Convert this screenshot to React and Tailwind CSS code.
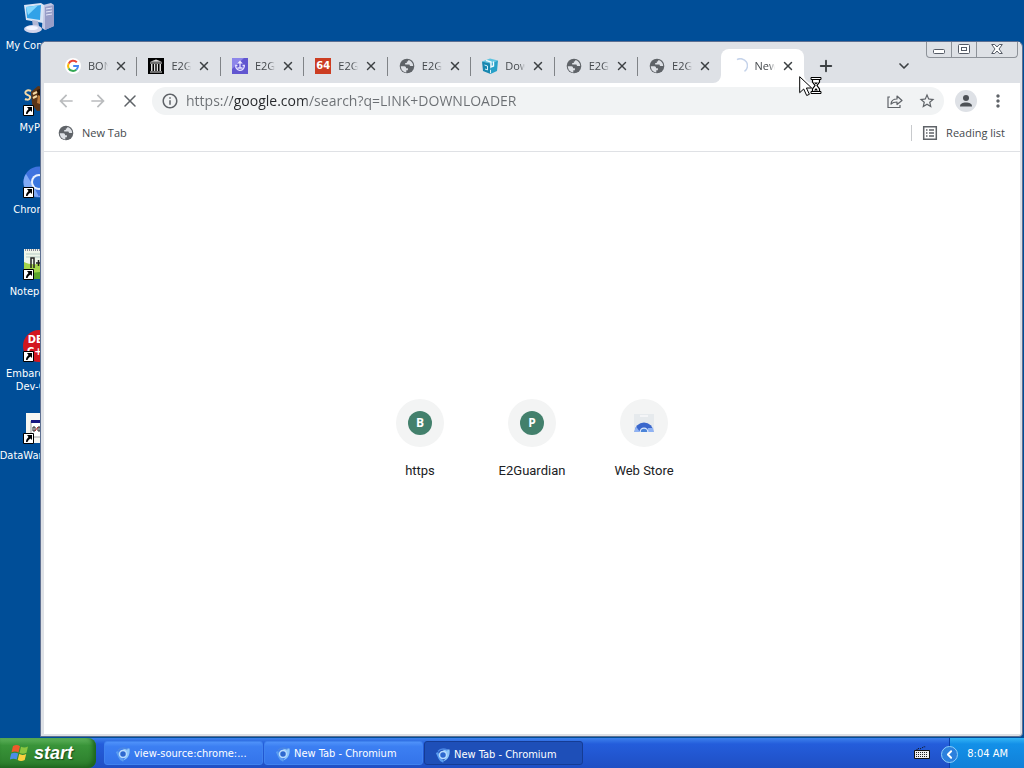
import { ChevronDown, ChevronLeft, Plus, X } from "lucide-react";
import { MdStarBorder, MdMoreVert, MdArrowBack, MdArrowForward, MdOutlineInfo } from "react-icons/md";

function Globe() {
  return (
    <svg viewBox="0 0 16 16" className="size-4">
      <circle cx="8" cy="8" r="7.3" fill="#5f6368" />
      <path d="M1.8 8.2l3.6.1c1.3 0 1.6.9 1.7 2h1.8v1.9H7.3v2.2C4 14.100 2 11.600 1.800 8.200zM9.400 2.100c-.1 1-.6 1.500-1.600 1.500v1.300H6.200v1.600h4.200c.4.600.4 1.300.9 1.500h2.900c-.1-2.900-2-5.200-4.800-5.900z" fill="#dee1e6" />
    </svg>
  );
}

function GoogleIcon() {
  return (
    <svg viewBox="0 0 16 16" className="size-4">
      <circle cx="8" cy="8" r="8" fill="#fff" />
      <g fill="none" strokeWidth="2">
        <path d="M11.800 4.200A5 5 0 0 0 3.700 5.600" stroke="#ea4335" />
        <path d="M3.700 5.600a5 5 0 0 0 0 4.800" stroke="#fbbc05" />
        <path d="M3.700 10.400a5 5 0 0 0 7.600 1.300" stroke="#34a853" />
        <path d="M11.300 11.700A5 5 0 0 0 13 8H8.200" stroke="#4285f4" />
      </g>
    </svg>
  );
}

function ArchiveIcon() {
  return (
    <svg viewBox="0 0 16 16" className="size-4">
      <path d="M0 0h16v16H0z" fill="#000" />
      <path d="M8 1.500l6 2.300H2zM2 4.500h12v1H2zM3 6h1.500v7H3zM6 6h1.300v7H6zM8.700 6H10v7H8.700zM11.500 6H13v7h-1.500zM2 13.500h12v1H2z" fill="#ddd" />
    </svg>
  );
}

function PurpleIcon() {
  return (
    <svg viewBox="0 0 16 16" className="size-4">
      <path d="M0 0h16v16H0z" fill="#6156d0" />
      <path d="M0 0h12L0 11z" fill="#8d86ea" />
      <path d="M8 2.500l2.800 3H5.200z" fill="#f0eeff" />
      <path d="M8 5v5M5.500 7.500H3.700a4.300 4.300 0 1 0 8.600 1V7.500h-1.800M5.500 10h5" fill="none" stroke="#e4e1ff" strokeWidth="1.300" />
    </svg>
  );
}

function BoxIcon() {
  return (
    <svg viewBox="0 0 16 16" className="size-4">
      <path d="M0 3.500L8 .5l8 2-7.500 3z" fill="#5cc3e0" />
      <path d="M0 3.500l8.500 2V16L1 13z" fill="#1787b0" />
      <path d="M8.500 5.500l7.500-3-1 10.500-6.500 3z" fill="#27a0c8" />
      <path d="M4 2.300l5 1.700v5l2.500-1V3.500" fill="none" stroke="#f1fbfe" strokeWidth="1.400" />
      <path d="M2.500 7l3 1v4l-2.500-1M8.500 12v3" fill="none" stroke="#d6f1f9" />
    </svg>
  );
}

function Commodore() {
  return (
    <span className="flex size-4 items-center justify-center bg-[#cc3d22] font-['DejaVu_Sans'] text-[10px] leading-none font-bold text-white">
      64
    </span>
  );
}

function Spinner() {
  return (
    <svg viewBox="0 0 16 16" className="size-4" fill="none">
      <path d="M5 1.600A7 7 0 0 1 12.500 13.400" stroke="#c5d3ea" strokeWidth="1.500" />
    </svg>
  );
}

function ChromiumIcon({ className }) {
  return (
    <svg viewBox="0 0 32 32" className={className}>
      <circle cx="16" cy="16" r="15.500" fill="#3f73df" />
      <path d="M3 8l8 13 5 10C6 31 .5 24 .5 16c0-3 1-6 2.500-8z" fill="#80aaf5" />
      <path d="M16 9h14c3 9-2 21-14 22l7-11z" fill="#a8c9ff" />
      <circle cx="16" cy="16" r="8" fill="#e9f1ff" />
      <circle cx="16" cy="16" r="6" fill="#3975de" />
    </svg>
  );
}

function TaskIcon() {
  return (
    <svg viewBox="0 0 16 16" className="size-4 shrink-0">
      <path d="M2 5.500L4.500 11a6 6 0 0 0 4 3.500" fill="none" stroke="#5a9df0" strokeWidth="2.500" />
      <path d="M8 2.500h6.500c.8 5-1 10-6 12l2.500-4.500z" fill="#8cc6fa" />
      <path d="M3 4.500C5 2 9 1.500 12.500 3" fill="none" stroke="#4a86e4" strokeWidth="1.500" />
      <circle cx="8" cy="8" r="3.500" fill="#2d68cf" stroke="#b8dcff" strokeWidth="1.500" />
    </svg>
  );
}

function ComputerIcon() {
  return (
    <svg viewBox="0 0 32 32" className="size-8">
      <path d="M20 3l8-2 3 2v21l-9 4-3-2z" fill="#c3c8e4" />
      <path d="M22 5l9-2v21l-9 4z" fill="#989ec8" />
      <path d="M23 7l6-1M23 10l6-1M23 13l6-1" stroke="#e4e7fa" />
      <path d="M1 3L18 1l3 2-1 18-17-3z" fill="#d9e5f5" />
      <path d="M3 5l15-2-1 15-13-2z" fill="#32a2e8" />
      <path d="M3 5l12-1.500L5 13z" fill="#82d8ff" />
      <path d="M9 18l6 1 1 5-6 1z" fill="#b2b7d4" />
      <ellipse cx="10" cy="27" rx="9" ry="4" fill="#d2d5ec" />
      <ellipse cx="9" cy="26" rx="6" ry="2" fill="#f4f5ff" />
    </svg>
  );
}

function PaintIcon() {
  return (
    <svg viewBox="0 0 32 32" className="size-8">
      <path d="M8 8l7-6 9 2 5 9-3 13-12 1-5-7z" fill="#5b3518" />
      <path d="M14 6l6-2 6 8-2 6-8 1z" fill="#24150b" />
      <path d="M15 11l5 2v8l-6-2z" fill="#b8793c" />
      <path d="M8 7C4 5 1 8 3 10s5 1 4 4-5 1-5 1M10 14l4-2M10 10l4-2" stroke="#f4d9a5" strokeWidth="2" fill="none" />
    </svg>
  );
}

function NotepadIcon() {
  return (
    <svg viewBox="0 0 32 32" className="size-8">
      <path d="M1 1h30v30H1z" fill="#eef6ea" />
      <path d="M1 14c8 4 15 2 30-1v18H1z" fill="#a4d64b" />
      <path d="M1 23c10 4 18 0 30-2v10H1z" fill="#5aa52b" />
      <path d="M2 2h28" stroke="#889" strokeWidth="2" strokeDasharray="1 1" />
      <path d="M3 6h26M3 9h26" stroke="#b4cbc4" />
      <path d="M8 20V10h3v10M13 15h5M15.500 12v6M20 15h5" stroke="#222" fill="none" strokeWidth="1.500" />
    </svg>
  );
}

function DevIcon() {
  return (
    <span className="flex size-8 flex-col items-center justify-center rounded-full bg-[#d3171f] text-[11px] leading-3 font-bold text-white">
      <span>DEV</span>
      <span>C++</span>
    </span>
  );
}

function DataIcon() {
  return (
    <svg viewBox="0 0 32 32" className="size-8">
      <path d="M3 1h27v30H3z" fill="#f7f7f2" />
      <path d="M8 9h20v16H8z" fill="#fff" stroke="#9b9b9b" />
      <path d="M8 8h20v3H8z" fill="#171680" />
      <path d="M10 15h2v4h-2zM15 15h2v4h-2z" fill="none" stroke="#222" />
      <path d="M12 19l3-4" stroke="#b22" />
      <path d="M19 15h6v6h-6z" fill="#36a" />
    </svg>
  );
}

function ShortcutArrow() {
  return (
    <svg viewBox="0 0 11 11" className="absolute bottom-0 left-0 size-[11px]">
      <path d="M.5.5h10v10H.5z" fill="#fff" stroke="#000" />
      <path d="M4 2h5v5L7.500 5.500C6 6.500 5 7.500 4.500 9H3c0-2 1-3.500 2.500-5z" fill="#000" />
    </svg>
  );
}

const shortcuts = [
  { label: "My Computer", icon: <ComputerIcon />, shortcut: false },
  { label: "MyPaint", icon: <PaintIcon />, shortcut: true },
  { label: "Chromium", icon: <ChromiumIcon className="size-8" />, shortcut: true },
  { label: "Notepad++", icon: <NotepadIcon />, shortcut: true },
  { label: "Embarcadero Dev-C++", icon: <DevIcon />, shortcut: true },
  { label: "DataWarehouse", icon: <DataIcon />, shortcut: true },
];

const tabs = [
  { title: "BONZI", icon: <GoogleIcon /> },
  { title: "E2G", icon: <ArchiveIcon /> },
  { title: "E2G", icon: <PurpleIcon /> },
  { title: "E2G", icon: <Commodore /> },
  { title: "E2G", icon: <Globe /> },
  { title: "Down", icon: <BoxIcon /> },
  { title: "E2G", icon: <Globe /> },
  { title: "E2G", icon: <Globe /> },
  { title: "New", icon: <Spinner />, active: true },
];

const tiles = [
  { label: "https", letter: "B" },
  { label: "E2Guardian", letter: "P" },
  { label: "Web Store" },
];

const tasks = [
  { title: "view-source:chrome:..." },
  { title: "New Tab - Chromium" },
  { title: "New Tab - Chromium", active: true },
];

function Tab({ title, icon, active, divider }) {
  return (
    <div
      className={`relative flex h-[34px] items-center ${active ? "rounded-t-lg bg-white pl-[11px]" : "pl-3"}`}
    >
      {divider && <span className="absolute top-2 left-0 h-[19px] w-px bg-[#808387]" />}
      {active && (
        <>
          <svg viewBox="0 0 8 8" className="absolute bottom-0 -left-2 size-2">
            <path d="M8 0v8H0a8 8 0 0 0 8-8z" fill="#fff" />
          </svg>
          <svg viewBox="0 0 8 8" className="absolute -right-2 bottom-0 size-2">
            <path d="M0 0v8h8a8 8 0 0 1-8-8z" fill="#fff" />
          </svg>
        </>
      )}
      <span className="shrink-0">{icon}</span>
      <span className="ml-[7px] w-5 overflow-hidden text-[11px] whitespace-nowrap text-[#45494d] mask-r-from-70%">
        {title}
      </span>
      <button type="button" aria-label="Close tab" className="ml-1.5 text-[#3c4043]">
        <X size={14} strokeWidth={2.5} />
      </button>
    </div>
  );
}

function CaptionButtons() {
  return (
    <div className="flex h-4 self-start rounded-b border border-t-0 border-[#8d9299] text-[#555b66]">
      <button type="button" aria-label="Minimize" className="flex w-6 items-center justify-center">
        <svg viewBox="0 0 12 5" className="mt-1 h-[5px] w-3" fill="#fff" stroke="currentColor">
          <rect x=".5" y=".5" width="11" height="4" rx="1" />
        </svg>
      </button>
      <button type="button" aria-label="Restore" className="flex w-[26px] items-center justify-center border-x border-[#8d9299] pb-0.5">
        <svg viewBox="0 0 12 10" className="h-2.5 w-3" fill="#fff" stroke="currentColor">
          <rect x=".5" y=".5" width="11" height="9" rx="1" />
          <rect x="3.500" y="3.500" width="5" height="3" />
        </svg>
      </button>
      <button type="button" aria-label="Close" className="flex w-10 items-center justify-center pb-0.5">
        <svg viewBox="0 0 12 10" className="h-2.5 w-3" fill="#fff" stroke="currentColor">
          <path d="M.7.500h3L6 3 8.300.500h3L8 5l3.300 4.500h-3L6 7 3.700 9.500h-3L4 5z" />
        </svg>
      </button>
    </div>
  );
}

function TabStrip() {
  return (
    <div className="flex h-[41px] items-end bg-[#dee1e6] pr-0.5 pl-[9px]">
      <div className="grid w-[751px] grid-cols-9">
        {tabs.map((tab, i) => (
          <Tab key={i} {...tab} divider={i > 0 && !tab.active} />
        ))}
      </div>
      <button type="button" aria-label="New tab" className="ml-[13px] flex h-[34px] items-center text-[#3c4043]">
        <Plus size={18} strokeWidth={2.500} />
      </button>
      <button type="button" aria-label="Search tabs" className="mr-[14px] ml-auto flex h-[34px] items-center text-[#3c4043]">
        <ChevronDown size={16} strokeWidth={2.500} />
      </button>
      <CaptionButtons />
    </div>
  );
}

function Toolbar() {
  return (
    <div className="flex h-9 items-center bg-white pl-3 text-[#5f6368]">
      <button type="button" aria-label="Back" className="text-[#babcbe]">
        <MdArrowBack size={20} />
      </button>
      <button type="button" aria-label="Forward" className="ml-3 text-[#babcbe]">
        <MdArrowForward size={20} />
      </button>
      <button type="button" aria-label="Stop" className="ml-3">
        <X size={20} strokeWidth={1.800} />
      </button>
      <div className="ml-3 flex h-7 flex-1 items-center rounded-full bg-[#f1f3f4] pr-2 pl-[9px]">
        <MdOutlineInfo size={18} className="shrink-0" />
        <input
          aria-label="Address"
          defaultValue="https://google.com/search?q=LINK+DOWNLOADER"
          className="ml-[7px] min-w-0 flex-1 bg-[linear-gradient(90deg,#6b6f73_46px,#26282b_46px,#26282b_121px,#6b6f73_121px)] bg-clip-text font-['Open_Sans',sans-serif] text-sm text-transparent outline-none"
        />
        <button type="button" aria-label="Share">
          <svg viewBox="0 0 16 16" className="size-4" fill="none" stroke="currentColor" strokeWidth="1.200">
            <path d="M3 4H1v10.500h12V12" />
            <path d="M4 11c.3-3.500 2.500-5 6-5V3l5 4.500-5 4V9C7.500 9 5.500 9.500 4 11z" strokeLinejoin="round" />
          </svg>
        </button>
        <button type="button" aria-label="Bookmark this tab" className="ml-[15px]">
          <MdStarBorder size={18} />
        </button>
      </div>
      <button type="button" aria-label="Profile" className="ml-[11px] flex size-[22px] items-center justify-center rounded-full bg-[#dee1e6]">
        <svg viewBox="0 0 14 14" className="size-3.5" fill="#4d5156">
          <circle cx="7" cy="4" r="3" />
          <path d="M1 12.500c0-3 2.500-4 6-4s6 1 6 4z" />
        </svg>
      </button>
      <button type="button" aria-label="Menu" className="mr-3 ml-[11px]">
        <MdMoreVert size={20} />
      </button>
    </div>
  );
}

function BookmarkBar() {
  return (
    <div className="flex h-[33px] items-center justify-between border-b border-[#dfe1e5] bg-white pr-[15px] pb-1 pl-3.5 text-[11px] text-[#45494d]">
      <button type="button" className="flex items-center gap-2">
        <Globe />
        New Tab
      </button>
      <button type="button" className="flex items-center gap-2 border-l border-[#c8cacd] pl-2.5">
        <svg viewBox="0 0 16 16" className="size-4" fill="none" stroke="#5f6368" strokeWidth="1.500">
          <path d="M1.700 1.700h12.600v12.600H1.700z" />
          <path d="M4 5h1.500M4 8h1.500M4 11h1.500M7 5h5M7 8h5M7 11h5" />
        </svg>
        Reading list
      </button>
    </div>
  );
}

function Tile({ label, letter }) {
  return (
    <a href="#" className="flex w-28 flex-col items-center">
      <span className="flex size-12 items-center justify-center rounded-full bg-[#f3f4f4]">
        {letter ? (
          <span className="flex size-6 items-center justify-center rounded-full bg-[#43806c] text-xs font-bold text-white">
            {letter}
          </span>
        ) : (
          <svg viewBox="0 0 24 24" className="size-6">
            <path d="M2 3h20v18H2z" fill="#e6eaed" />
            <path d="M8 5h8" stroke="#f8f9fa" strokeWidth="1.500" />
            <path d="M2.500 21a9.500 9.500 0 0 1 19 0z" fill="#3a67cc" />
            <path d="M2.500 21c0-2 .6-4 1.700-5.300L8 21zM16 17h5c.4 1 .6 2.500.5 4H16z" fill="#8fb2f3" />
            <path d="M7.500 21a4.500 4.500 0 0 1 9 0z" fill="#dce8fc" />
            <path d="M8.800 21a3.200 3.200 0 0 1 6.400 0z" fill="#4b84d8" />
          </svg>
        )}
      </span>
      <span className="mt-3.5 font-[Roboto,sans-serif] text-[13px] leading-5 text-[#202124]">{label}</span>
    </a>
  );
}

function BrowserWindow() {
  return (
    <section className="absolute top-[41px] right-px bottom-px left-10 flex flex-col rounded-t-md rounded-br-sm border border-[#5d6f91] bg-[#dee1e6] pr-0.5 pb-0.5 pl-[3px]">
      <TabStrip />
      <Toolbar />
      <BookmarkBar />
      <main className="flex flex-1 items-center justify-center bg-white pb-1.5">
        {tiles.map((tile) => (
          <Tile key={tile.label} {...tile} />
        ))}
      </main>
    </section>
  );
}

function BusyCursor() {
  return (
    <svg viewBox="0 0 24 22" className="absolute top-[76px] left-[799px] h-[22px] w-6">
      <path d="M.7.700v16l4-3.700 3 6.500 2.700-1.200-3-6.300h5.300z" fill="#fff" stroke="#000" />
      <path d="M13.500 3v3l2.500 3.500-2.500 3.500v3h7v-3L18 9.500 20.500 6V3z" fill="#fff" stroke="#000" strokeWidth="1.200" />
      <path d="M12 1.500h10v2H12zM12 15.500h10v2H12z" fill="#fff" stroke="#000" />
      <path d="M15 6.500h4l-2 2zM17 12l2 2.500h-4z" fill="#000" />
    </svg>
  );
}

function Taskbar() {
  return (
    <footer className="flex h-[30px] items-stretch bg-linear-to-b from-[#3d80ec] via-[#245ddb] via-20% to-[#1f4fc4] font-['DejaVu_Sans_Condensed','Open_Sans',sans-serif] text-[11px] text-white">
      <button
        type="button"
        className="flex w-24 items-center gap-1 rounded-r-lg bg-linear-to-b from-[#5fb35c] via-[#399439] via-25% to-[#2b7c2b] pl-2.5 shadow-[inset_-3px_-2px_4px_#1d641d]"
      >
        <svg viewBox="0 0 20 18" className="h-[18px] w-5">
          <path d="M3 2c3-1.500 5-1 7 .2L8.500 8.500c-2-1-4-1.500-7-.2z" fill="#ee5a2b" />
          <path d="M11 2.700c2 1 4.500 1.200 7-.2l-1.500 6.300c-2.500 1.400-5 1.200-7 .2z" fill="#8ac640" />
          <path d="M1.200 9.500c3-1.400 5-.9 7 .1l-1.500 6c-2-1-4-1.300-7 0z" fill="#4b8de8" />
          <path d="M9.200 10.100c2 1 4.500 1.200 7-.2l-1.500 6.100c-2.500 1.400-5 1.200-7 .1z" fill="#fbd03f" />
        </svg>
        <span className="font-['Liberation_Sans',sans-serif] text-lg leading-none font-bold italic [text-shadow:1px_1px_1px_#1b4a1b]">
          start
        </span>
      </button>
      <nav className="ml-2 flex flex-1 gap-px py-[3px]">
        {tasks.map((task, i) => (
          <button
            key={i}
            type="button"
            className={`flex w-[159px] items-center gap-[3px] rounded-[3px] border pl-2.5 whitespace-nowrap ${
              task.active
                ? "border-[#153c94] bg-[#1e4fb8] pt-1"
                : "border-[#3f82ee] bg-linear-to-b from-[#4f92fa] via-[#3c7ff2] via-20% to-[#3474ea] pt-0.5"
            }`}
          >
            <TaskIcon />
            {task.title}
          </button>
        ))}
      </nav>
      <svg viewBox="0 0 16 14" className="mt-2 mr-[19px] h-3.5 w-4">
        <path d="M3 4c0-3 3 0 5-2s4-1 4-1" stroke="#111" fill="none" strokeDasharray="1 1" />
        <path d="M.5 4.500h15v8H.5z" fill="#eee" stroke="#111" />
        <path d="M2 6.500h12M2 8.500h12M2 10.500h12" stroke="#222" strokeDasharray="1 1" />
      </svg>
      <div className="flex items-center border-l border-[#0b3ea8] bg-linear-to-b from-[#33b5f5] via-[#1390e8] via-20% to-[#1180d8] pt-0.5 pr-4">
        <button
          type="button"
          aria-label="Show hidden icons"
          className="-ml-[9px] flex size-[17px] items-center justify-center rounded-full border border-[#8fd0fa] bg-[#2b80dd]"
        >
          <ChevronLeft size={13} strokeWidth={3.500} />
        </button>
        <span className="ml-[9px]">8:04 AM</span>
      </div>
    </footer>
  );
}

export default function App() {
  return (
    <div className="flex h-screen flex-col overflow-hidden bg-[#004e98] font-['Open_Sans',sans-serif]">
      <div className="relative flex-1">
        <div className="flex w-[78px] flex-col pt-0.5 font-['DejaVu_Sans_Condensed','Open_Sans',sans-serif]">
          {shortcuts.map((item) => (
            <a key={item.label} href="#" className="flex h-[82px] flex-col items-center text-center text-[11px] leading-[13px] text-white">
              <span className="relative">
                {item.icon}
                {item.shortcut && <ShortcutArrow />}
              </span>
              <span className="mt-[5px]">{item.label}</span>
            </a>
          ))}
        </div>
        <BrowserWindow />
        <BusyCursor />
      </div>
      <Taskbar />
    </div>
  );
}
